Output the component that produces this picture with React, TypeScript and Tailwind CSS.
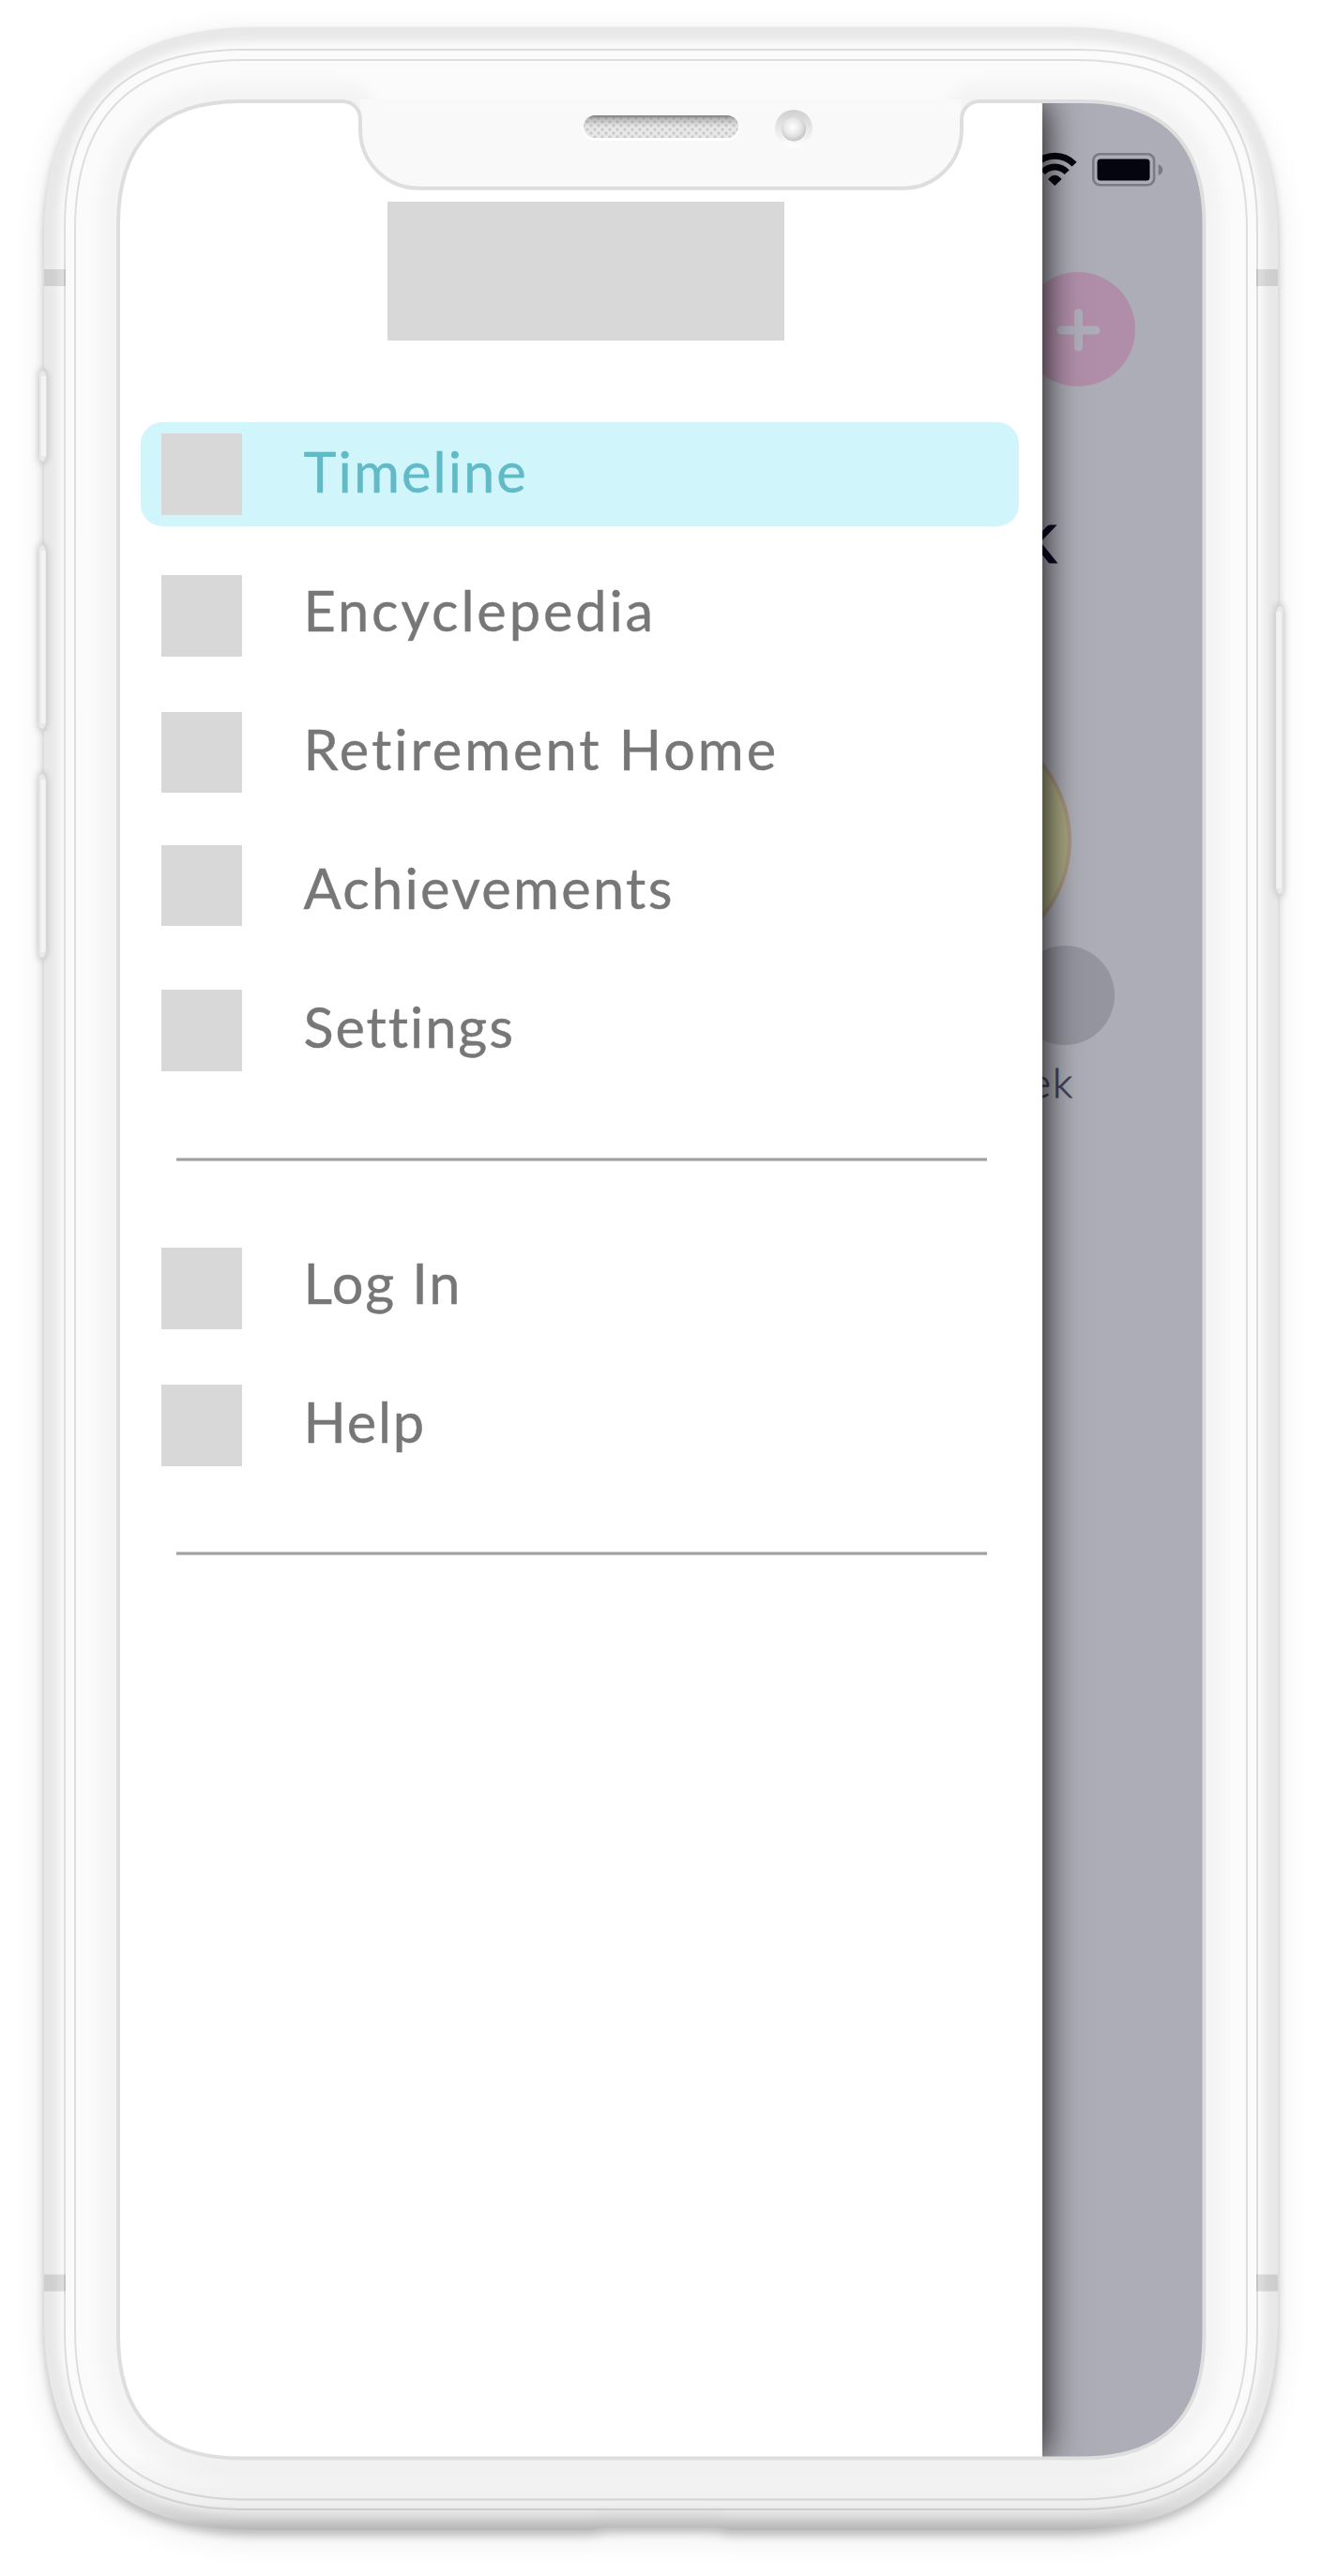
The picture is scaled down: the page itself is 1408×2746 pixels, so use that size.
/** Rounded rectangle with continuous (squircle-like) corners. */
function squircle(x1: number, y1: number, x2: number, y2: number, r: number) {
  const c = r * 0.333;
  return (
    `M${x1} ${y1 + r}C${x1} ${y1 + c} ${x1 + c} ${y1} ${x1 + r} ${y1}H${x2 - r}` +
    `C${x2 - c} ${y1} ${x2} ${y1 + c} ${x2} ${y1 + r}V${y2 - r}` +
    `C${x2} ${y2 - c} ${x2 - c} ${y2} ${x2 - r} ${y2}H${x1 + r}` +
    `C${x1 + c} ${y2} ${x1} ${y2 - c} ${x1} ${y2 - r}Z`
  );
}

const BODY =
  "M47 256C47 105 123 29 274 29H1135C1286 29 1362 105 1362 256V2470C1362 2621 1286 2697 1135 2697" +
  "H779C770 2697 772 2694 752 2694H656C636 2694 638 2697 629 2697H274C123 2697 47 2621 47 2470Z";

const SCREEN =
  "M126 239C126 152 170 108 257 108H365C376 108 384 116.5 384 127V138C384 173 412 200.7 447 200.7" +
  "H962C997 200.7 1025 173 1025 138V127C1025 116.5 1033 108 1044 108H1152.5C1239.5 108 1283.5 152 1283.5 239" +
  "V2489.5C1283.5 2576.5 1239.5 2620.5 1152.5 2620.5H257C170 2620.5 126 2576.5 126 2489.5Z";

function SideButton({ x, y, h, flip }: { x: number; y: number; h: number; flip?: boolean }) {
  const t = flip ? `translate(${x} ${y}) scale(-1 1)` : `translate(${x} ${y})`;
  return (
    <g transform={t}>
      <path d={`M0 8Q-1 3 4 1L8 8V${h - 8}L4 ${h}Q-1 ${h - 2} 0 ${h - 8}Z`} fill="#000" opacity="0.22" filter="url(#buttonShadow)" />
      <path d={`M2 5Q3 1 6 0Q9.500 3 9.500 10V${h - 10}Q9.500 ${h - 3} 6 ${h}Q3 ${h - 1} 2 ${h - 5}Z`} fill="#d6d6d6" />
      <path d={`M0.500 6Q4 0 7 6L8 11V${h - 11}L7 ${h - 6}Q4 ${h} 0.500 ${h - 6}Z`} fill="#e9e9e9" />
      <rect x="2.500" y="9" width="5" height={h - 18} fill="#f4f4f4" />
    </g>
  );
}

function PhoneBody() {
  return (
    <svg className="absolute inset-0" width="1408" height="2746" viewBox="0 0 1408 2746" aria-hidden="true">
      <defs>
        <clipPath id="bodyClip">
          <path d={BODY} />
        </clipPath>
        <clipPath id="screenClip" clipPathUnits="userSpaceOnUse">
          <path d={SCREEN} />
        </clipPath>
        <filter id="blur5" x="-10%" y="-10%" width="120%" height="120%">
          <feGaussianBlur stdDeviation="5" />
        </filter>
        <filter id="blur7" x="-10%" y="-10%" width="120%" height="120%">
          <feGaussianBlur stdDeviation="7" />
        </filter>
        <filter id="blur18" x="-10%" y="-10%" width="120%" height="120%">
          <feGaussianBlur stdDeviation="18" />
        </filter>
        <filter id="buttonShadow" x="-400%" y="-20%" width="900%" height="140%">
          <feGaussianBlur stdDeviation="4" />
        </filter>
        <linearGradient id="base" gradientUnits="userSpaceOnUse" x1="0" y1="2610" x2="0" y2="2697">
          <stop offset="0" stopColor="#000" stopOpacity="0" />
          <stop offset="0.68" stopColor="#000" stopOpacity="0.05" />
          <stop offset="0.85" stopColor="#000" stopOpacity="0.1" />
          <stop offset="1" stopColor="#000" stopOpacity="0.22" />
        </linearGradient>
      </defs>
      <path d={BODY} fill="#000" opacity="0.08" transform="translate(0 8)" filter="url(#blur18)" />
      <path d={BODY} fill="#000" opacity="0.22" transform="translate(0 6)" filter="url(#blur5)" />
      <path d={BODY} fill="#fbfbfb" />
      <g clipPath="url(#bodyClip)">
        <path d={BODY} fill="none" stroke="#000" strokeOpacity="0.075" strokeWidth="30" filter="url(#blur5)" />
        <path d={SCREEN} fill="none" stroke="#000" strokeOpacity="0.028" strokeWidth="40" filter="url(#blur7)" />
        <rect x="0" y="2610" width="1408" height="90" fill="url(#base)" />
        <path d="M47 287h23v18H47zM1339 287h23v18h-23zM47 2424.500h23v18H47zM1339 2424.500h23v18h-23z" fill="#000" opacity="0.11" />
      </g>
      <path d={squircle(69, 53, 1340, 2675, 190)} fill="none" stroke="#000" strokeOpacity="0.115" strokeWidth="2" />
      <path d={squircle(80, 64, 1329, 2664.5, 181)} fill="none" stroke="#000" strokeOpacity="0.115" strokeWidth="2" />
      <SideButton x={41.5} y={392} h={103} />
      <SideButton x={41} y={578} h={202} />
      <SideButton x={41} y={822} h={202} />
      <SideButton x={1368} y={643} h={313} flip />
      <path d="M384 106h641v32c0 35-28 62.700-63 62.700H447c-35 0-63-27.700-63-62.700z" fill="#f9f9f9" />
    </svg>
  );
}

function PhoneFront() {
  return (
    <svg className="pointer-events-none absolute inset-0" width="1408" height="2746" viewBox="0 0 1408 2746" aria-hidden="true">
      <defs>
        <pattern id="mesh" width="8" height="8" patternUnits="userSpaceOnUse">
          <circle cx="2" cy="2" r="1.800" fill="#d2d2d2" />
          <circle cx="6" cy="6" r="1.800" fill="#d2d2d2" />
        </pattern>
        <linearGradient id="slot" x1="0" y1="0" x2="0" y2="1">
          <stop offset="0" stopColor="#787878" />
          <stop offset="0.15" stopColor="#808080" stopOpacity="0.5" />
          <stop offset="0.5" stopColor="#808080" stopOpacity="0.1" />
          <stop offset="1" stopColor="#808080" stopOpacity="0.1" />
        </linearGradient>
        <linearGradient id="lensRing" x1="0" y1="0" x2="0" y2="1">
          <stop offset="0" stopColor="#cfcfcf" />
          <stop offset="1" stopColor="#ffffff" />
        </linearGradient>
        <radialGradient id="lens" cx="0.45" cy="0.42" r="0.58">
          <stop offset="0" stopColor="#ffffff" />
          <stop offset="0.6" stopColor="#e6e6e6" />
          <stop offset="1" stopColor="#c4c4c4" />
        </radialGradient>
      </defs>
      <path d={SCREEN} fill="none" stroke="#dedede" strokeWidth="4" />
      <rect x="621" y="124" width="167" height="26" rx="13" fill="#fff" />
      <rect x="622" y="123" width="165" height="24" rx="12" fill="#f3f3f3" />
      <rect x="622" y="123" width="165" height="24" rx="12" fill="url(#mesh)" />
      <rect x="622" y="123" width="165" height="24" rx="12" fill="url(#slot)" />
      <circle cx="846" cy="137" r="20" fill="url(#lensRing)" />
      <circle cx="846" cy="137.500" r="13" fill="url(#lens)" />
    </svg>
  );
}

function WifiIcon() {
  return (
    <svg width="50" height="40" viewBox="1100 160 50 40" fill="none" stroke="#05050f" strokeWidth="7">
      <path d="M1103.500 175.200A28.600 28.600 0 0 1 1145.100 175.200" />
      <path d="M1111.400 183.700A17.400 17.400 0 0 1 1137.200 183.700" />
      <path d="M1117 191Q1124.300 182.500 1131.600 191L1124.300 198Z" fill="#05050f" stroke="none" />
    </svg>
  );
}

function BatteryIcon() {
  return (
    <svg width="80" height="40" viewBox="1162 160 80 40">
      <rect x="1165.300" y="164.200" width="64.800" height="33" rx="7" fill="none" stroke="#7b7b87" strokeWidth="2.600" />
      <rect x="1169.500" y="169.500" width="56" height="23" rx="3.500" fill="#05050f" />
      <path d="M1234.700 175Q1239.300 177 1239.300 181T1234.700 187Z" fill="#7b7b87" />
    </svg>
  );
}

/** The dimmed timeline page that lies under the open drawer. */
function TimelineBackdrop() {
  return (
    <div className="absolute inset-0 flex flex-col items-end bg-[#adadb7] pt-[160px]">
      <div className="flex gap-3 pr-[166px]">
        <WifiIcon />
        <BatteryIcon />
      </div>
      <div className="mr-[198px] mt-[90px] flex size-[122px] items-center justify-center rounded-full bg-[#b08ea9]">
        <svg width="48" height="48" viewBox="0 0 48 48" stroke="#adadb8" strokeWidth="9" strokeLinecap="round">
          <path d="M24.500 6.500V43M6 25H43" />
        </svg>
      </div>
      <h1 className="mr-[281px] mt-[109px] text-[80px] leading-[96px] text-[#0a0a24] [-webkit-text-stroke:1px_#0a0a24]">Week</h1>
      <div className="mr-[266px] mt-[150px] size-[258px] rounded-full border-4 border-[#a6967f] bg-[#a9a983]" />
      <div className="-mt-[17px] mr-[220px] size-[106px] rounded-full bg-[#9595a0]" />
      <p className="mr-[263px] mt-[13px] text-[44px] font-light leading-[52px] tracking-[2px] text-[#44425c] [-webkit-text-stroke:0.8px_#44425c]">
        Week
      </p>
    </div>
  );
}

type Item = { label: string; icon: string; text: string; active?: boolean };

const mainItems: Item[] = [
  { label: "Timeline", icon: "mt-[12px] h-[87px]", text: "tracking-[2.1px]", active: true },
  { label: "Encyclepedia", icon: "mt-[15.3px] h-[87px]", text: "tracking-[2.9px]" },
  { label: "Retirement Home", icon: "mt-[13px] h-[86px]", text: "tracking-[2.95px]" },
  { label: "Achievements", icon: "mt-[7px] h-[86px]", text: "tracking-[2.3px]" },
  { label: "Settings", icon: "mt-[13px] h-[87px]", text: "tracking-[1.9px]" },
];

const accountItems: Item[] = [
  { label: "Log In", icon: "mt-[15px] h-[87px]", text: "tracking-[1.9px]" },
  { label: "Help", icon: "mt-[12.5px] h-[87px]", text: "tracking-[1.8px]" },
];

function MenuList({ items }: { items: Item[] }) {
  return (
    <ul className="flex flex-col gap-[37px]">
      {items.map((item) => (
        <li
          key={item.label}
          className={`flex h-[111px] items-start gap-[65.5px] rounded-[23px] pl-[22px] ${
            item.active ? "bg-[#d0f6fc] text-[#62bac7]" : "text-[#777777]"
          }`}
        >
          <span className={`w-[86px] shrink-0 bg-[#d8d8d8] ${item.icon}`} />
          <span className={`whitespace-nowrap text-[59.5px] leading-[104px] [-webkit-text-stroke:0.4px_currentColor] ${item.text}`}>
            {item.label}
          </span>
        </li>
      ))}
    </ul>
  );
}

function Divider() {
  return <hr className="ml-[37.5px] mr-[34px] h-[4px] border-y border-[#c8c8c8] bg-[#a0a0a0]" />;
}

function Drawer() {
  return (
    <aside className="relative flex h-[2511px] w-[985px] flex-col gap-[87px] bg-white pl-[24px] pr-[25px] pt-[107px] shadow-[0_0_38px_#000000]">
      <div className="ml-[263px] h-[148px] w-[423px] shrink-0 bg-[#d8d8d8]" />
      <nav className="flex flex-col">
        <MenuList items={mainItems} />
        <div className="pb-[77px] pt-[81px]">
          <Divider />
        </div>
        <MenuList items={accountItems} />
        <div className="pt-[80px]">
          <Divider />
        </div>
      </nav>
    </aside>
  );
}

export default function App() {
  return (
    <main className="relative h-[2746px] w-[1408px] overflow-hidden bg-white font-['Lato',sans-serif] [font-variant-ligatures:none]">
      <PhoneBody />
      <div className="relative flex h-full w-full pl-[126px] pt-[108px] [clip-path:url(#screenClip)]">
        <TimelineBackdrop />
        <Drawer />
      </div>
      <PhoneFront />
    </main>
  );
}
